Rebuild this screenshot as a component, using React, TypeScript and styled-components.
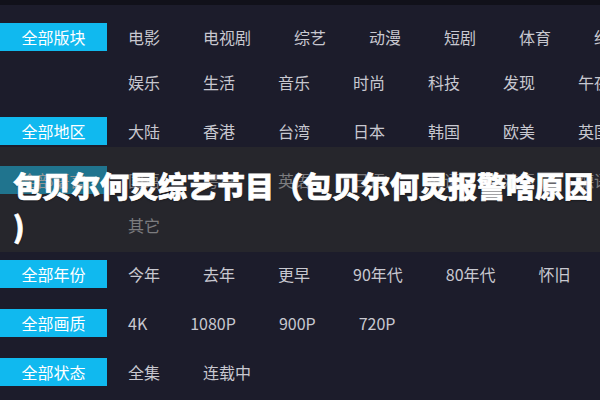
import React from "react"
import styled, { createGlobalStyle } from "styled-components"

type Group = {
  label: string
  lines: string[][]
}

const groups: Group[] = [
  {
    label: "全部版块",
    lines: [
      ["电影", "电视剧", "综艺", "动漫", "短剧", "体育", "纪录片"],
      ["娱乐", "生活", "音乐", "时尚", "科技", "发现", "午夜"],
    ],
  },
  {
    label: "全部地区",
    lines: [["大陆", "香港", "台湾", "日本", "韩国", "欧美", "英国"]],
  },
  {
    label: "全部语言",
    lines: [["国语", "粤语", "英语", "日语", "韩语", "法语", "德语"], ["其它"]],
  },
  {
    label: "全部年份",
    lines: [["今年", "去年", "更早", "90年代", "80年代", "怀旧"]],
  },
  {
    label: "全部画质",
    lines: [["4K", "1080P", "900P", "720P"]],
  },
  {
    label: "全部状态",
    lines: [["全集", "连载中"]],
  },
]

const GlobalStyle = createGlobalStyle`
  body {
    margin: 0;
    background: #1c1c2b;
    font-family: "Noto Sans CJK SC", "Noto Sans", sans-serif;
  }
`

const Page = styled.div`
  position: relative;
  width: 600px;
  height: 400px;
  overflow: hidden;
  background: #1c1c2b;
`

const TopStrip = styled.div`
  height: 5px;
  background: #11111a;
`

const FilterList = styled.div`
  display: flex;
  flex-direction: column;
  gap: 4px;
  padding-top: 9px;
`

const FilterGroup = styled.div`
  display: grid;
  grid-template-columns: 107px 1fr;
`

const Label = styled.div`
  align-self: start;
  height: 28px;
  margin-top: 8.5px;
  display: flex;
  align-items: center;
  justify-content: center;
  background: #10b9ef;
  color: #ffffff;
  font-size: 16px;
`

const Lines = styled.div`
  display: flex;
  flex-direction: column;
  min-width: 0;
`

const Line = styled.div`
  height: 45px;
  display: flex;
  align-items: center;
  gap: 43px;
  padding-left: 21px;
  white-space: nowrap;
  overflow: hidden;
`

const Item = styled.span`
  flex: none;
  color: #c8c8d0;
  font-size: 16px;
`

const Banner = styled.div`
  position: absolute;
  top: 147px;
  left: 0;
  right: 0;
  height: 105px;
  box-sizing: border-box;
  padding: 18px 0 0 13px;
  background: rgba(48, 48, 46, 0.5);
`

const Title = styled.h1`
  margin: 0;
  color: #ffffff;
  font-size: 29px;
  font-weight: 900;
  line-height: 40px;
  white-space: nowrap;
  -webkit-text-stroke: 0.7px #ffffff;
  text-shadow: 0 1px 2px rgba(0, 0, 0, 0.4);
`

export default function App() {
  return (
    <Page>
      <GlobalStyle />
      <TopStrip />
      <FilterList>
        {groups.map(group => (
          <FilterGroup key={group.label}>
            <Label>{group.label}</Label>
            <Lines>
              {group.lines.map((line, i) => (
                <Line key={i}>
                  {line.map(item => (
                    <Item key={item}>{item}</Item>
                  ))}
                </Line>
              ))}
            </Lines>
          </FilterGroup>
        ))}
      </FilterList>
      <Banner>
        <Title>
          包贝尔何炅综艺节目（包贝尔何炅报警啥原因
          <br />)
        </Title>
      </Banner>
    </Page>
  )
}
